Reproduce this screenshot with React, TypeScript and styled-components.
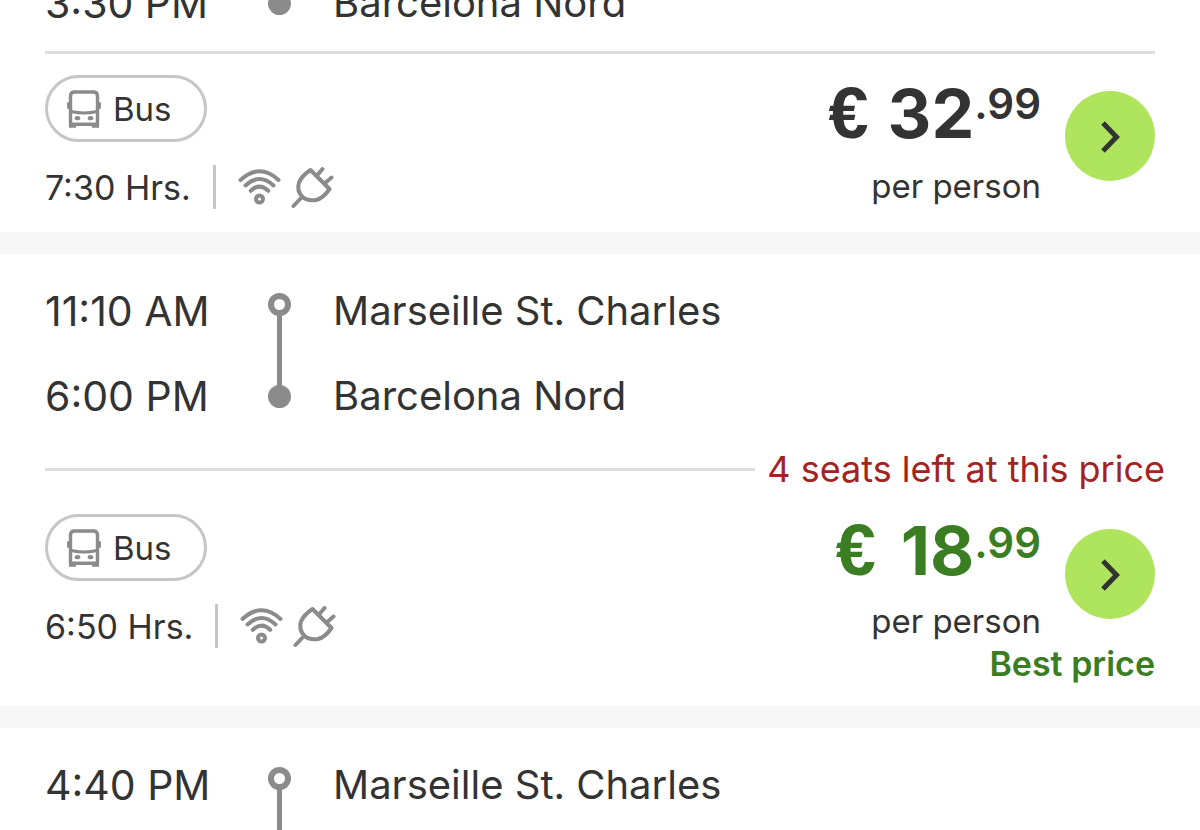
import React from "react";
import styled, { createGlobalStyle } from "styled-components";

const GlobalStyle = createGlobalStyle`
  * { box-sizing: border-box; }
  body {
    margin: 0;
    background: #f6f6f6;
    color: #333;
    font-family: Inter, "Liberation Sans", sans-serif;
  }
`;

const Results = styled.main`
  display: flex;
  flex-direction: column;
  gap: 22px;
  height: 100vh;
  overflow: hidden;
`;

const Card = styled.article<{ $cutTop?: boolean; $grow?: boolean }>`
  display: flex;
  flex-direction: column;
  flex: ${(p) => (p.$grow ? "1 0 auto" : "none")};
  padding: 15px 45px 0;
  margin-top: ${(p) => (p.$cutTop ? "-54px" : "0")};
  background: #fff;
`;

const Route = styled.div`
  display: flex;
  flex: 1 0 auto;
`;

const StopColumn = styled.div<{ $width?: number }>`
  display: flex;
  flex-direction: column;
  flex: ${(p) => (p.$width ? `0 0 ${p.$width}px` : "1")};
  font-size: ${(p) => (p.$width ? "41px" : "40px")};
  line-height: ${(p) => (p.$width ? "85px" : "84px")};
  white-space: nowrap;

  > * {
    height: 85px;
  }
`;

const Track = styled.div<{ $open?: boolean }>`
  display: flex;
  flex-direction: column;
  align-items: center;
  width: 23px;
  margin-right: 42px;
  padding: 24px 0 ${(p) => (p.$open ? "0" : "31px")};
`;

const Stop = styled.i<{ $filled?: boolean }>`
  flex: none;
  width: 23px;
  height: 23px;
  border: 6px solid #8b8b8b;
  border-radius: 50%;
  background: ${(p) => (p.$filled ? "#8b8b8b" : "#fff")};
`;

const Line = styled.i`
  flex: 1;
  width: 5px;
  margin: -1px 0;
  background: #8b8b8b;
`;

const DividerRow = styled.div<{ $tall?: boolean }>`
  display: flex;
  align-items: center;
  gap: 12px;
  height: ${(p) => (p.$tall ? "50px" : "3px")};
  margin-top: 5px;
`;

const Divider = styled.hr`
  flex: 1;
  height: 3px;
  margin: 0;
  border: 0;
  background: #dedede;
`;

const SeatsLeft = styled.strong`
  margin-right: -10px;
  color: #a32323;
  font-size: 36px;
  font-weight: 400;
  line-height: 44px;
`;

const Details = styled.div<{ $best?: boolean }>`
  display: flex;
  justify-content: space-between;
  padding: ${(p) => (p.$best ? "20px 0 21px" : "21px 0 23px")};
`;

const Service = styled.div`
  display: flex;
  flex-direction: column;
  align-items: flex-start;
  gap: 23px;
`;

const Pill = styled.span`
  display: flex;
  align-items: center;
  gap: 12px;
  height: 67px;
  padding: 0 32px 0 19px;
  border: 3px solid #c6c6c6;
  border-radius: 34px;
  font-size: 33px;
  line-height: 40px;
`;

const Meta = styled.div`
  display: flex;
  align-items: center;
  height: 44px;
  font-size: 34px;
`;

const Amenities = styled.div`
  display: flex;
  align-items: center;
  gap: 10px;
  height: 44px;
  margin-left: 22px;
  padding-left: 22px;
  border-left: 3px solid #c6c6c6;
`;

const Offer = styled.div`
  display: flex;
  flex-direction: column;
  align-items: flex-end;
`;

const OfferMain = styled.div`
  display: flex;
  align-items: flex-start;
  gap: 24px;
`;

const PriceBlock = styled.div`
  display: flex;
  flex-direction: column;
  align-items: flex-end;
  gap: 13px;
`;

const Price = styled.div<{ $best?: boolean }>`
  display: flex;
  align-items: baseline;
  gap: ${(p) => (p.$best ? "25px" : "19px")};
  height: ${(p) => (p.$best ? "72px" : "76px")};
  color: ${(p) => (p.$best ? "#3b7d23" : "#333")};
  font-size: 68px;
  font-weight: 700;
  line-height: ${(p) => (p.$best ? "72px" : "76px")};
`;

const Currency = styled.span`
  font-family: "Liberation Sans", sans-serif;
  font-size: 72px;
`;

const Amount = styled.span`
  display: flex;
  align-items: flex-start;
`;

const Cents = styled.sup`
  font-size: 42px;
  font-weight: 600;
  line-height: ${"58px"};
  vertical-align: baseline;
`;

const PerPerson = styled.span`
  font-size: 33px;
  line-height: 44px;
`;

const BestPrice = styled.strong`
  color: #3b7d23;
  font-size: 34px;
  font-weight: 600;
  line-height: 42px;
`;

const SelectButton = styled.button<{ $best?: boolean }>`
  display: grid;
  place-items: center;
  width: 90px;
  height: 90px;
  margin-top: ${(p) => (p.$best ? "15px" : "16px")};
  padding: 0;
  border: 0;
  border-radius: 50%;
  background: #aee55d;
  color: #333;
  cursor: pointer;
`;

const BusIcon = () => (
  <svg width="34" height="38" viewBox="0 0 34 38" fill="none" aria-hidden="true">
    <path d="M3.500 35V6Q3.500 2 7.500 2H26.500Q30.500 2 30.500 6V35" stroke="#8b8b8b" strokeWidth="3.400" />
    <path d="M4 21.500Q17 24.500 30 21.500" stroke="#8b8b8b" strokeWidth="3" />
    <path d="M2 32.500V37.800H9V36H25V37.800H32V32.500Z" fill="#8b8b8b" />
    <path d="M2 12H1.500Q0 12 0 13.500V17.500Q0 19 2 19ZM32 12H32.500Q34 12 34 13.500V17.500Q34 19 32 19Z" fill="#8b8b8b" />
    <ellipse cx="10.500" cy="28.200" rx="2.800" ry="2.100" fill="#8b8b8b" />
    <ellipse cx="23.500" cy="28.200" rx="2.800" ry="2.100" fill="#8b8b8b" />
  </svg>
);

const WifiIcon = () => (
  <svg width="43" height="38" viewBox="0 0 43 38" fill="none" stroke="#8b8b8b" strokeWidth="4" strokeLinecap="round" aria-label="Wi-Fi">
    <path d="M2.500 12Q21.500 -5.500 40.500 12" />
    <path d="M7.500 17.500Q21.500 4.500 35.500 17.500" />
    <path d="M12.800 22.800Q21.500 14.500 30.200 22.800" />
    <circle cx="21.500" cy="31" r="3.500" />
  </svg>
);

const PlugIcon = () => (
  <svg width="43" height="44" viewBox="0 0 43 44" fill="none" stroke="#8b8b8b" strokeWidth="4" strokeLinecap="round" strokeLinejoin="round" aria-label="Power socket">
    <path d="M19.500 5L38.500 24Q32 33.500 25 35Q16.500 36.500 11 31.500Q5.500 25.500 8 17.500Q10.500 11 19.500 5Z" />
    <path d="M11 32L2.500 41M26 10.500L31.500 4M33.500 18.500L40.500 12.500" />
  </svg>
);

const ChevronIcon = () => (
  <svg width="20" height="34" viewBox="0 0 20 34" fill="none" stroke="currentColor" strokeWidth="5" aria-hidden="true">
    <path d="M3 4L16.500 18L3 32" />
  </svg>
);

type Trip = {
  departure?: [string, string];
  arrival?: [string, string];
  duration?: string;
  euros?: string;
  cents?: string;
  notice?: string;
  best?: boolean;
};

const trips: Trip[] = [
  { arrival: ["3:30 PM", "Barcelona Nord"], duration: "7:30 Hrs.", euros: "32", cents: ".99" },
  {
    departure: ["11:10 AM", "Marseille St. Charles"],
    arrival: ["6:00 PM", "Barcelona Nord"],
    duration: "6:50 Hrs.",
    euros: "18",
    cents: ".99",
    notice: "4 seats left at this price",
    best: true,
  },
  { departure: ["4:40 PM", "Marseille St. Charles"] },
];

function TripCard({ trip }: { trip: Trip }) {
  const { departure, arrival, best } = trip;
  return (
    <Card $cutTop={!departure} $grow={!arrival}>
      <Route>
        <StopColumn $width={223}>
          {departure && <time>{departure[0]}</time>}
          {arrival && <time>{arrival[0]}</time>}
        </StopColumn>
        <Track $open={!arrival}>
          {departure && <Stop />}
          <Line />
          {arrival && <Stop $filled />}
        </Track>
        <StopColumn>
          {departure && <span>{departure[1]}</span>}
          {arrival && <span>{arrival[1]}</span>}
        </StopColumn>
      </Route>
      {trip.duration && (
        <>
          <DividerRow $tall={!!trip.notice}>
            <Divider />
            {trip.notice && <SeatsLeft>{trip.notice}</SeatsLeft>}
          </DividerRow>
          <Details $best={best}>
            <Service>
              <Pill>
                <BusIcon />
                Bus
              </Pill>
              <Meta>
                {trip.duration}
                <Amenities>
                  <WifiIcon />
                  <PlugIcon />
                </Amenities>
              </Meta>
            </Service>
            <Offer>
              <OfferMain>
                <PriceBlock>
                  <Price $best={best}>
                    <Currency>€</Currency>
                    <Amount>
                      {trip.euros}
                      <Cents>{trip.cents}</Cents>
                    </Amount>
                  </Price>
                  <PerPerson>per person</PerPerson>
                </PriceBlock>
                <SelectButton type="button" aria-label="Select trip" $best={best}>
                  <ChevronIcon />
                </SelectButton>
              </OfferMain>
              {best && <BestPrice>Best price</BestPrice>}
            </Offer>
          </Details>
        </>
      )}
    </Card>
  );
}

export default function App() {
  return (
    <>
      <GlobalStyle />
      <Results>
        {trips.map((trip, i) => (
          <TripCard key={i} trip={trip} />
        ))}
      </Results>
    </>
  );
}
